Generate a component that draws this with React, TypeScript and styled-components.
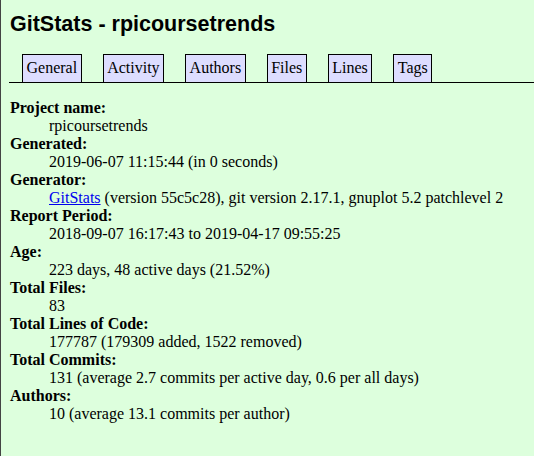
import { createGlobalStyle } from "styled-components";
import styled from "styled-components";

const Global = createGlobalStyle`
  html, body {
    margin: 0;
    padding: 0;
    background-color: #dfd;
  }
  body {
    color: black;
    font-family: "Liberation Serif", "Times New Roman", serif;
    font-size: 16px;
  }
`;

const Page = styled.div`
  min-height: 456px;
  box-sizing: border-box;
  border-left: 1px solid #444;
  padding: 0 0 8px 8px;
`;

const Title = styled.h1`
  font-family: "Liberation Sans", Arial, sans-serif;
  font-size: 21.5px;
  font-weight: bold;
  margin: 0;
  padding: 12px 0 0 1px;
  line-height: 25px;
`;

const Nav = styled.ul`
  list-style: none;
  display: flex;
  align-items: flex-end;
  gap: 21px;
  height: 29px;
  margin: 16px 0 0 0;
  padding: 0 0 0 13px;
  border-bottom: 1px solid black;
`;

const Tab = styled.li`
  display: flex;
`;

const TabLink = styled.a`
  display: block;
  text-decoration: none;
  color: black;
  background-color: #ddf;
  border: 1px solid black;
  border-bottom: none;
  padding: 4px 3.5px 5px 3.5px;
  line-height: 18px;
`;

const Details = styled.dl`
  margin: 16px 0 0 1px;
  line-height: 18px;
`;

const Term = styled.dt`
  font-weight: bold;
  &::after {
    content: ":";
  }
`;

const Value = styled.dd`
  margin-left: 39px;
`;

const Link = styled.a`
  color: #00e;
  text-decoration: underline;
`;

const tabs = ["General", "Activity", "Authors", "Files", "Lines", "Tags"];

export default function App() {
  return (
    <>
      <Global />
      <Page>
        <Title>GitStats - rpicoursetrends</Title>
        <Nav>
          {tabs.map((t) => (
            <Tab key={t}>
              <TabLink href="#">{t}</TabLink>
            </Tab>
          ))}
        </Nav>
        <Details>
          <Term>Project name</Term>
          <Value>rpicoursetrends</Value>
          <Term>Generated</Term>
          <Value>2019-06-07 11:15:44 (in 0 seconds)</Value>
          <Term>Generator</Term>
          <Value>
            <Link href="#">GitStats</Link> (version 55c5c28), git version 2.17.1, gnuplot 5.2 patchlevel 2
          </Value>
          <Term>Report Period</Term>
          <Value>2018-09-07 16:17:43 to 2019-04-17 09:55:25</Value>
          <Term>Age</Term>
          <Value>223 days, 48 active days (21.52%)</Value>
          <Term>Total Files</Term>
          <Value>83</Value>
          <Term>Total Lines of Code</Term>
          <Value>177787 (179309 added, 1522 removed)</Value>
          <Term>Total Commits</Term>
          <Value>131 (average 2.7 commits per active day, 0.6 per all days)</Value>
          <Term>Authors</Term>
          <Value>10 (average 13.1 commits per author)</Value>
        </Details>
      </Page>
    </>
  );
}
